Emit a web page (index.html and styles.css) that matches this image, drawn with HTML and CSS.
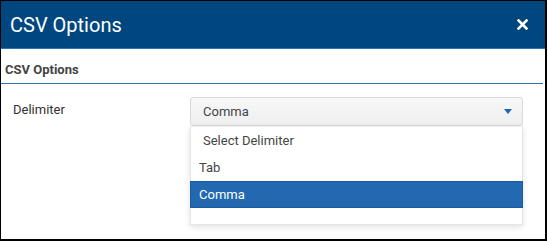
FILE: index.html
```html
<!DOCTYPE html>
<html lang="en">
<head>
  <meta charset="UTF-8" />
  <title>CSV Options</title>
  <link rel="stylesheet" href="styles.css">
</head>
<body>
  <div class="dialog">
    <div class="dialog-header">
      <h1>CSV Options</h1>
      <button class="close-btn" aria-label="Close">
        <svg width="11" height="11" viewBox="0 0 11 11">
          <path d="M1.5 1.5 L9.5 9.5 M9.5 1.5 L1.5 9.5" stroke="#fff" stroke-width="2.6" stroke-linecap="square" />
        </svg>
      </button>
    </div>

    <div class="section-title">CSV Options</div>

    <!-- Delimiter row -->
    <div class="form-row">
      <label class="form-label">Delimiter</label>
      <div class="select-wrap">
        <div class="select-box">
          <span>Comma</span>
          <span class="caret"></span>
        </div>
        <ul class="select-list">
          <li class="placeholder">Select Delimiter</li>
          <li>Tab</li>
          <li class="active">Comma</li>
        </ul>
      </div>
    </div>
  </div>
</body>
</html>
```

FILE: styles.css
```css
body {
  margin: 0;
  font-family: Roboto, 'Liberation Sans', sans-serif;
  background: #fff;
}

.dialog {
  width: 547px;
  height: 241px;
  box-sizing: border-box;
  border-top: 1px solid #000;
  border-left: 1px solid #000;
  border-right: 2px solid #000;
  border-bottom: 2px solid #000;
  background: #fff;
  overflow: hidden;
}

.dialog-header {
  height: 47px;
  background: #00467f;
  border-bottom: 1px solid #2a6fb8;
  display: flex;
  align-items: center;
  justify-content: space-between;
  padding: 0 17px 0 9px;
}

.dialog-header h1 {
  margin: 0;
  font-size: 20px;
  font-weight: 400;
  color: #fff;
}

.close-btn {
  border: none;
  background: none;
  padding: 0;
  width: 11px;
  height: 11px;
  display: flex;
  cursor: pointer;
}

.section-title {
  height: 35px;
  box-sizing: border-box;
  margin-right: 2px;
  padding: 0 4px 6px;
  display: flex;
  align-items: flex-end;
  font-size: 13px;
  font-weight: 700;
  color: #444;
  border-bottom: 1px solid #2a70b8;
}

.form-row {
  display: flex;
  align-items: flex-start;
  margin-top: 13px;
  padding-left: 12px;
}

.form-label {
  width: 177px;
  padding-top: 5px;
  font-size: 13px;
  color: #333;
}

.select-wrap {
  position: relative;
  width: 333px;
}

.select-box {
  height: 29px;
  box-sizing: border-box;
  border: 1px solid #dadada;
  border-radius: 3px;
  background: linear-gradient(#f7f7f7, #efefef);
  display: flex;
  align-items: center;
  justify-content: space-between;
  padding: 0 10px 0 12px;
  font-size: 13px;
  color: #444;
}

.caret {
  width: 0;
  height: 0;
  border-left: 4px solid transparent;
  border-right: 4px solid transparent;
  border-top: 5px solid #1f66b3;
}

/* open dropdown lies over the form */
.select-list {
  position: absolute;
  top: 29px;
  left: 0;
  right: 0;
  margin: 0;
  padding: 0 0 16px;
  list-style: none;
  background: #fff;
  border: 1px solid #e6e6e6;
  border-top: 1px solid #eee;
  box-shadow: 0 2px 6px rgba(0, 0, 0, 0.12);
}

.select-list li {
  height: 27px;
  box-sizing: border-box;
  display: flex;
  align-items: center;
  padding-left: 8px;
  font-size: 13px;
  color: #444;
}

.select-list li.placeholder {
  padding-left: 12px;
}

.select-list li.active {
  background: #2269b2;
  border: 1px solid #1a5a9e;
  margin: 0 -1px;
  color: #fff;
}
```
